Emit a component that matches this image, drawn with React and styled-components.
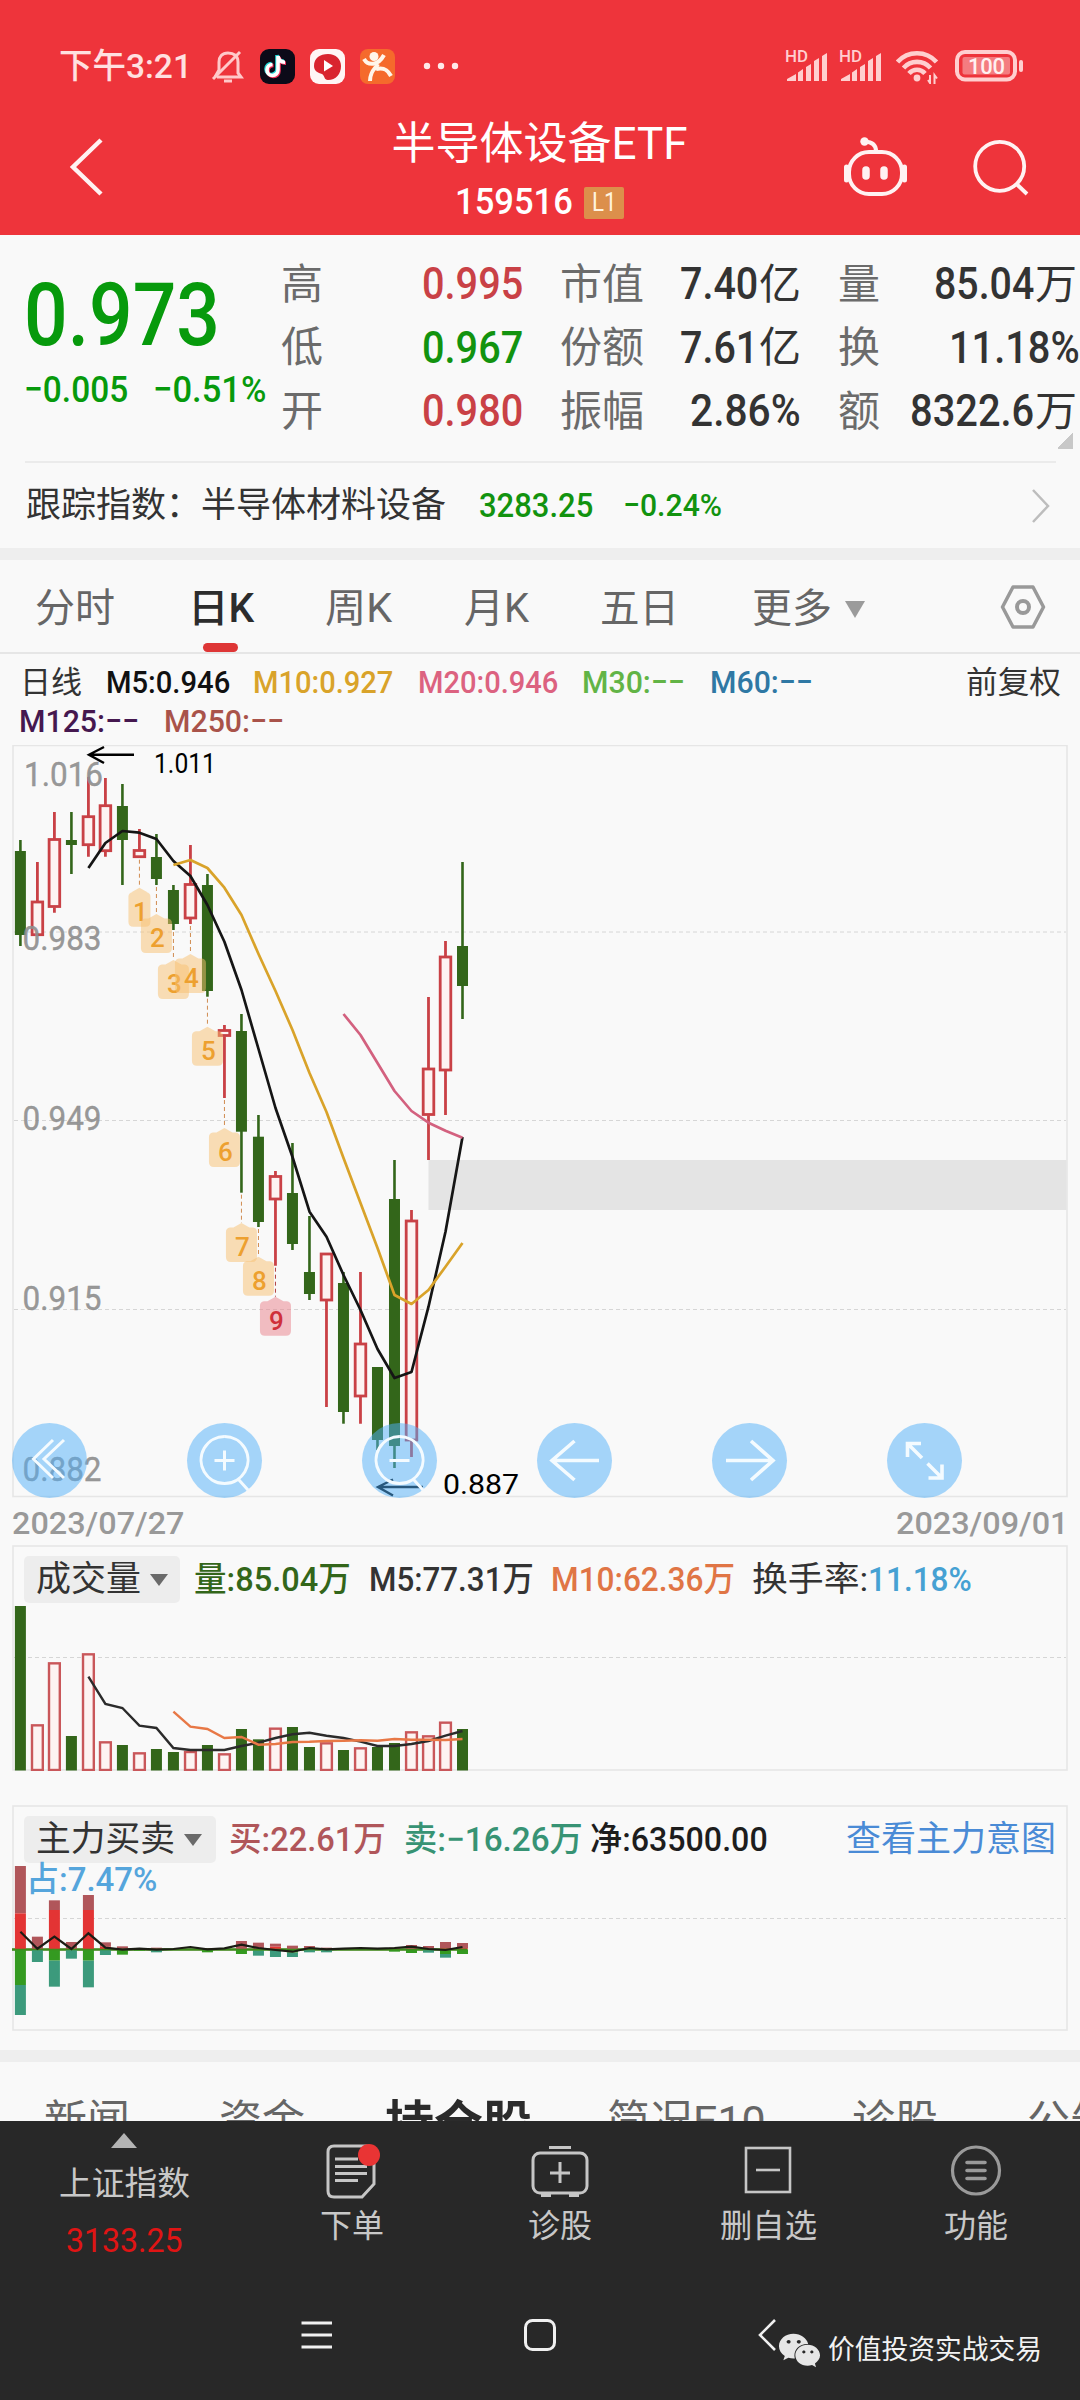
import React, { useLayoutEffect, useRef, useState } from "react";
import styled, { createGlobalStyle } from "styled-components";
import { FaWeixin } from "react-icons/fa";

const GlobalStyle = createGlobalStyle`
  * { box-sizing: border-box; }
  body {
    margin: 0;
    background: #f9f9f9;
    font-family: Roboto, "Noto Sans CJK SC", sans-serif;
    color: #333;
  }
  svg { display: block; flex: none; }
`;

const RED = "#c94146";
const GREEN = "#33661a";

const Page = styled.div`
  width: 1080px;
  height: 2400px;
  overflow: hidden;
  display: flex;
  flex-direction: column;
  background: #f9f9f9;
`;

/* ---------- text squeezed to a given width ---------- */

const FitBox = styled.span`
  display: block;
  flex: none;
  width: ${p => p.$w}px;
  margin-left: ${p => p.$ml || 0}px;
  line-height: 1.2;
  font-size: ${p => p.$size}px;
  font-weight: ${p => p.$weight || 400};
  color: ${p => p.$color || "inherit"};
`;

const FitInner = styled.span`
  display: inline-block;
  vertical-align: top;
  white-space: nowrap;
  transform-origin: left center;
`;

function Fit({ w, ml, size, color, weight, children }) {
  const ref = useRef(null);
  const [scale, setScale] = useState(1);
  useLayoutEffect(() => {
    setScale(w / ref.current.offsetWidth);
  }, [w]);
  return (
    <FitBox $w={w} $ml={ml} $size={size} $color={color} $weight={weight}>
      <FitInner ref={ref} style={{ transform: `scaleX(${scale})` }}>
        {children}
      </FitInner>
    </FitBox>
  );
}

/* ---------- header ---------- */

const Header = styled.header`
  height: 235px;
  flex: none;
  background: #ee343b;
  color: #fff;
`;

const StatusBar = styled.div`
  height: 86px;
  padding: 46px 0 0 59px;
  display: flex;
  align-items: center;
  color: #ffe0e0;
`;

const StatusIcons = styled.div`
  display: flex;
  align-items: center;
  margin-left: ${p => p.$ml}px;
  gap: ${p => p.$gap}px;
`;

const TitleBar = styled.div`
  height: 149px;
  display: grid;
  grid-template-columns: 393px 293px 1fr;
`;

const TitleSide = styled.div`
  display: flex;
  align-items: center;
  padding-top: 12px;
  padding-left: ${p => p.$pl}px;
  gap: 63px;
`;

const TitleCenter = styled.div`
  display: flex;
  flex-direction: column;
  align-items: center;
  padding-top: 32px;
`;

const CodeRow = styled.div`
  display: flex;
  align-items: center;
  height: 36px;
  margin-top: 14px;
`;

const LevelBadge = styled.span`
  width: 40px;
  height: 32px;
  margin-left: 11px;
  background: #dc8f4b;
  display: flex;
  align-items: center;
  justify-content: center;
  border-radius: 2px;
`;

function Bell() {
  return (
    <svg width="34" height="36" viewBox="0 0 34 36" fill="none" stroke="#ffc9c9" strokeWidth="3">
      <path d="M6 29 H30 L27 25 V14 C27 8 23 5 17 5 C11 5 8 9 8 14 V22 L4 29" />
      <path d="M2 31 L29 4" />
      <path d="M13 33 h8" />
    </svg>
  );
}

const NOTE = "M18 7 V21 a5.5 5.5 0 1 1 -5.5 -5.5 M18 7 c0.5 4 3 6.200 7 6.200";

function TikTok() {
  return (
    <svg width="35" height="35" viewBox="0 0 35 35" fill="none" strokeWidth="3.600">
      <rect width="35" height="35" rx="9" fill="#0c0a18" />
      <path d={NOTE} stroke="#25d8d8" transform="translate(-1 -1)" />
      <path d={NOTE} stroke="#f2335b" transform="translate(1 1)" />
      <path d={NOTE} stroke="#fff" />
    </svg>
  );
}

function PlayApp() {
  return (
    <svg width="35" height="35" viewBox="0 0 35 35">
      <rect width="35" height="35" rx="9" fill="#fff5f5" />
      <path d="M4 17 C4 9 10 5 18 5 C26 5 31 10 31 17 C31 25 26 31 18 31 C14 31 15 27 12 25 C8 24 4 22 4 17 Z" fill="#d9242f" />
      <path d="M14 11 L23 17 L14 22.500 Z" fill="#fff" />
    </svg>
  );
}

function RunnerApp() {
  return (
    <svg width="35" height="35" viewBox="0 0 35 35" fill="none" stroke="#fff6ea" strokeWidth="4">
      <rect width="35" height="35" rx="8" fill="#f56a2c" stroke="none" />
      <circle cx="14" cy="7.500" r="4.500" fill="#fff6ea" stroke="none" />
      <path d="M4 10 C8 17 18 17 24 6" />
      <path d="M10 32 C10 22 15 20 18 15 M16 20 C24 18 28 21 31 27" />
    </svg>
  );
}

function Dots() {
  return (
    <svg width="36" height="8" viewBox="0 0 36 8" fill="#ffe9e9">
      <circle cx="4" cy="4" r="3.200" />
      <circle cx="18" cy="4" r="3.200" />
      <circle cx="32" cy="4" r="3.200" />
    </svg>
  );
}

function Signal() {
  return (
    <svg width="42" height="34" viewBox="0 0 42 34" fill="#ffcfcf">
      <text x="0" y="13" fontSize="16" fontWeight="500" textLength="23" lengthAdjust="spacingAndGlyphs">HD</text>
      <path d="M2 32 V30 L11 25 V32 Z M13 32 V23.500 L18 20 V32 Z M21 32 V18 L26 15 V32 Z M29 32 V12 L34 9 V32 Z M37 32 V7 L42 4 V32 Z" />
    </svg>
  );
}

function Wifi() {
  return (
    <svg width="44" height="36" viewBox="0 0 44 36" fill="none" stroke="#ffcfcf" strokeWidth="4.600">
      <path d="M1.500 14 A26 26 0 0 1 40.500 14" />
      <path d="M7.500 20 A18 18 0 0 1 34.500 20" />
      <path d="M13 25.500 A10.500 10.500 0 0 1 29 25.500" />
      <circle cx="21" cy="30" r="3.400" fill="#ffcfcf" stroke="none" />
      <path d="M34 27 V35 L32 32 M38.500 36 V27 L41 30.500" strokeWidth="2" />
    </svg>
  );
}

function Battery() {
  return (
    <svg width="70" height="32" viewBox="0 0 70 32" fill="none">
      <rect x="2" y="2" width="58" height="27.500" rx="8" stroke="#ffcfcf" strokeWidth="4" />
      <rect x="7.500" y="7" width="47.500" height="17.500" rx="2" fill="#f47c80" />
      <path d="M66 12 V20" stroke="#ffcfcf" strokeWidth="4" strokeLinecap="round" />
      <text x="13" y="24" fontSize="22" fontWeight="500" textLength="37" fill="#fff0f0">100</text>
    </svg>
  );
}

function Robot() {
  return (
    <svg width="66" height="62" viewBox="842 137 66 62" fill="none" stroke="#fff2f2" strokeWidth="4">
      <rect x="849" y="153" width="53" height="42" rx="20" />
      <path d="M876 152 C876 146 872 143 865 142.500" />
      <circle cx="864.500" cy="142.500" r="4.200" fill="#fff2f2" stroke="none" />
      <path d="M846.500 168 V181 M904.500 168 V181" strokeWidth="5" strokeLinecap="round" />
      <path d="M866 171 V177 M884 171 V177" strokeWidth="7.500" strokeLinecap="round" />
    </svg>
  );
}

function Search() {
  return (
    <svg width="60" height="60" viewBox="971 138 60 60" fill="none" stroke="#fff2f2" strokeWidth="3.800">
      <circle cx="999.700" cy="167.300" r="24.500" />
      <path d="M1016.500 185 L1027 195" />
    </svg>
  );
}

/* ---------- quote ---------- */

const Quote = styled.section`
  height: 226px;
  flex: none;
  display: flex;
  background:
    linear-gradient(135deg, transparent 50%, #c8c8c8 50%) 1058px 197px / 15px 17px no-repeat;
`;

const PriceBlock = styled.div`
  width: 281px;
  flex: none;
  padding: 28px 0 0 24px;
  color: #079a0c;
`;

const ChangeRow = styled.div`
  display: flex;
  margin-top: 1px;
`;

const Stats = styled.div`
  display: grid;
  grid-template-columns: 242px 241px 239px;
  grid-auto-rows: 63.5px;
  column-gap: 37px;
  padding-top: 18px;
`;

const Stat = styled.div`
  display: flex;
  align-items: center;
  color: ${p => p.$color || "#333"};
  margin-right: ${p => p.$mr || 0}px;
`;

const StatLabel = styled.span`
  flex: 1;
  font-size: 42px;
  line-height: 50px;
  color: #6b6b6b;
  white-space: nowrap;
`;

const stats = [
  ["高", "0.995", 101, "", RED],
  ["市值", "7.40", 78, "亿"],
  ["量", "85.04", 100, "万"],
  ["低", "0.967", 101, "", "#12930f"],
  ["份额", "7.61", 78, "亿"],
  ["换", "11.18%", 131, "", "", -3],
  ["开", "0.980", 101, "", RED],
  ["振幅", "2.86%", 111, ""],
  ["额", "8322.6", 124, "万"],
];

const IndexRow = styled.div`
  height: 87px;
  flex: none;
  display: flex;
  align-items: center;
  margin: 0 24px 0 25px;
  border-top: 2px solid #ebebeb;
`;

const Chevron = styled.svg`
  margin-left: auto;
  margin-right: 4px;
`;

const Band = styled.div`
  height: 12px;
  flex: none;
  background: #eeeeee;
`;

/* ---------- period tabs ---------- */

const Tabs = styled.nav`
  height: 94px;
  flex: none;
  display: flex;
  align-items: center;
  padding-top: 2px;
  border-bottom: 2px solid #e6e6e6;
  color: #666;
`;

const Tab = styled.div`
  position: relative;
  display: flex;
  align-items: center;
  height: 100%;
  padding-top: ${p => (p.$icon ? 0 : 4)}px;
  margin-left: ${p => p.$ml}px;
  ${p => p.$active && `
    color: #2c2c2c;
    &::after {
      content: "";
      position: absolute;
      left: 15px;
      bottom: 0;
      width: 35px;
      height: 9px;
      border-radius: 5px;
      background: #de3636;
    }
  `}
`;

const Caret = styled.span`
  width: 0;
  height: 0;
  margin-left: ${p => p.$ml}px;
  border-left: ${p => p.$s}px solid transparent;
  border-right: ${p => p.$s}px solid transparent;
  border-top: ${p => p.$h}px solid ${p => p.$color};
`;

/* ---------- charts ---------- */

const Legend = styled.div`
  height: 91px;
  flex: none;
  padding-top: 9px;
`;

const LegendRow = styled.div`
  height: 39px;
  display: flex;
  align-items: center;
`;

const ChartWrap = styled.div`
  position: relative;
  flex: none;
`;

const Tools = styled.div`
  position: absolute;
  left: 12px;
  bottom: 2px;
  display: flex;
  gap: 100px;
`;

const Tool = styled.button`
  width: 75px;
  height: 75px;
  padding: 0;
  border: 0;
  border-radius: 50%;
  background: rgba(80, 175, 250, 0.5);
`;

const Dates = styled.div`
  height: 45px;
  flex: none;
  display: flex;
  align-items: center;
  justify-content: space-between;
  padding: 1px 12px 0 12px;
  color: #999;
`;

const Panel = styled.section`
  flex: none;
  display: grid;
  margin-bottom: ${p => p.$mb || 0}px;
  > * { grid-area: 1 / 1; }
`;

const PanelHead = styled.div`
  padding: 11px 0 0 24px;
`;

const PanelRow = styled.div`
  display: flex;
  align-items: center;
  height: ${p => p.$h || 47}px;
`;

const Picker = styled.div`
  width: ${p => p.$w}px;
  height: 47px;
  flex: none;
  display: flex;
  align-items: center;
  background: #ededed;
  border-radius: 5px;
`;

const cx = i => 20.4 + 17.004 * i;

// up/down, high, body top, body bottom, low
const candles = [
  ["d", 840, 851, 935, 946],
  ["u", 862, 902, 935.7, 935.7],
  ["u", 812, 839.5, 907.5, 912.7],
  ["d", 812, 840, 845, 874],
  ["u", 777, 816.7, 845.7, 856.7],
  ["u", 778, 805.7, 851.7, 856.7],
  ["d", 784, 806, 840, 885],
  ["u", 829, 850.5, 857.7, 857.7],
  ["d", 834, 857, 879, 885],
  ["d", 885, 890, 924, 930],
  ["u", 845, 884.5, 919, 924],
  ["d", 874, 885, 991, 996.7],
  ["u", 1025, 1030.5, 1036.5, 1098],
  ["d", 1014, 1031, 1131.7, 1192.7],
  ["d", 1115, 1136.7, 1222, 1227],
  ["u", 1171, 1176.5, 1200, 1265.7],
  ["d", 1143, 1193, 1244, 1250],
  ["d", 1216, 1272, 1294, 1300],
  ["u", 1254, 1254, 1301, 1407],
  ["d", 1272, 1283, 1412, 1423.7],
  ["u", 1272, 1344, 1397, 1423.7],
  ["d", 1367, 1367, 1440, 1450],
  ["d", 1160, 1199, 1446, 1468],
  ["u", 1210, 1221, 1441, 1457],
  ["u", 997, 1069, 1115.5, 1160],
  ["u", 941, 957, 1071, 1115],
  ["d", 862, 946, 986, 1019],
];

const ma5 = [868, 843, 831, 832.7, 839, 861, 876, 905, 941.7, 990, 1049, 1108, 1157, 1211.7, 1236.7, 1275, 1310, 1349, 1378, 1372, 1306.7, 1231.7, 1137];
const ma10 = [865, 860, 868, 887.7, 915, 954, 991, 1030, 1073, 1112, 1158, 1203, 1248, 1295, 1304, 1290, 1266.7, 1243];
const ma20 = [1014, 1035, 1063, 1091, 1111, 1122.7, 1130.7, 1137.7];

// label, y of the tip
const marks = [887.7, 914, 960, 954, 1026.7, 1128, 1223, 1256.7, 1296.7];

const volumes = [198, 553, 367, 588, 340, 604, 615, 637, 627, 636, 633, 615, 640, 567, 598, 563, 561, 621, 607, 630, 622, 621, 609, 574, 586, 545, 567].map(v => 1540 + v / 3);
const vol5 = [410, 492, 504, 557, 564, 624, 630, 630, 630, 618, 608, 594, 583, 578, 587, 594, 605, 618, 618, 612, 603, 587, 573].map(v => 1540 + v / 3);
const vol10 = [515, 560, 567, 594, 591, 614, 612, 606, 605, 603, 602, 601, 602, 597, 599, 599, 600, 597].map(v => 1540 + v / 3);

// index, buy top, big buy top, big sell bottom, sell bottom
const flows = [
  [0, 258, 400, 615, 705],
  [1, 470, 508, 508, 546],
  [2, 361, 390, 542, 620],
  [3, 486, 508, 508, 536],
  [4, 345, 390, 542, 622],
  [5, 487, 500, 508, 525],
  [6, 499, 508, 524, 524],
  [7, 505, 508, 512, 512],
  [8, 503, 508, 508, 517],
  [11, 505, 508, 517, 517],
  [13, 483, 508, 522, 522],
  [14, 488, 508, 512, 527],
  [15, 491, 500, 508, 531],
  [16, 497, 508, 518, 531],
  [17, 498, 508, 508, 517],
  [18, 503, 508, 508, 517],
  [22, 503, 508, 515, 515],
  [23, 495, 508, 519, 519],
  [24, 498, 508, 508, 518],
  [25, 486, 505, 522, 533],
  [26, 489, 505, 522, 522],
];
const net = [455, 506, 470, 507, 460, 503, 509, 506, 509, 507, 501, 508, 505, 494, 504, 510, 515, 504, 508, 506, 504, 506, 504, 500, 507, 510, 501].map(v => 1780 + v / 3);

const line = (values, from) => values.map((y, i) => `${cx(i + from).toFixed(1)},${y.toFixed(1)}`).join(" ");

function Frame({ y, h, grid }) {
  return (
    <g fill="none" stroke="#e6e6e6">
      <rect x="13" y={y} width="1054" height={h} strokeWidth="1.600" />
      {grid.map(g => (
        <path key={g} d={`M14 ${g} H1066`} stroke="#d6d6d6" strokeWidth="1" strokeDasharray="4 3" />
      ))}
    </g>
  );
}

function Candle({ i, data: [dir, high, top, bottom, low] }) {
  const x = cx(i);
  if (dir === "d") {
    return (
      <g fill={GREEN}>
        <rect x={x - 1.3} y={high} width="2.6" height={low - high} />
        <rect x={x - 5.5} y={top} width="11" height={bottom - top} />
      </g>
    );
  }
  return (
    <g stroke={RED} strokeWidth="2.8" fill="#fdf3f2">
      <path d={`M${x} ${high} V${top} M${x} ${bottom} V${low}`} />
      <rect x={x - 5.3} y={top} width="10.6" height={Math.max(bottom - top, 2) - 1} />
    </g>
  );
}

function Mark({ n, y, x, low }) {
  const hot = n === 9;
  const w = n === 1 ? 11 : 15.5;
  return (
    <g>
      <path d={`M${x} ${low + 2} V${y}`} stroke={hot ? "#b04040" : "#d08c50"} strokeDasharray="4 3" />
      <path
        d={`M${x} ${y} L${x + 8} ${y + 4.5} H${x + w - 4} Q${x + w} ${y + 5} ${x + w} ${y + 9} V${y + 34} Q${x + w} ${y + 39} ${x + w - 5} ${y + 39} H${x - w + 5} Q${x - w} ${y + 39} ${x - w} ${y + 34} V${y + 9} Q${x - w} ${y + 5} ${x - w + 4} ${y + 4.5} H${x - 8} Z`}
        fill={hot ? "#ea808a" : "#f8c070"}
        fillOpacity="0.5"
      />
      <text x={x + 1} y={y + 33} fontSize="26" fontWeight="500" textAnchor="middle" fill={hot ? "#cf2f3a" : "#eda02f"}>{n}</text>
    </g>
  );
}

const prices = [["1.016", 785.5], ["0.983", 949.5], ["0.949", 1129.5], ["0.915", 1309.5], ["0.882", 1481]];

function PriceChart() {
  return (
    <svg width="1080" height="755" viewBox="0 745 1080 755">
      <Frame y={745.5} h={751} grid={[932, 1120.5, 1309.5]} />
      <rect x="428.500" y="1160" width="638" height="50" fill="#e4e4e4" />
      {candles.map((c, i) => <Candle key={i} i={i} data={c} />)}
      {marks.map((y, i) => <Mark key={i} n={i + 1} y={y} x={cx(i + 7)} low={candles[i + 7][4]} />)}
      <g fill="none" strokeWidth="2.700" strokeLinejoin="round">
        <polyline points={line(ma5, 4)} stroke="#151515" />
        <polyline points={line(ma10, 9)} stroke="#d9a32a" />
        <polyline points={line(ma20, 19)} stroke="#d3617f" />
      </g>
      <g fill="#8f8f8f" fillOpacity="0.92" fontSize="34" stroke="#8f8f8f" strokeWidth="0.400">
        {prices.map(([t, y], i) => (
          <text key={t} x={i ? 22.5 : 24} y={y} textLength="79" lengthAdjust="spacingAndGlyphs">{t}</text>
        ))}
      </g>
      <g fontSize="28.500" fill="#000">
        <text x="154" y="773" textLength="62" lengthAdjust="spacingAndGlyphs">1.011</text>
        <text x="443" y="1494" textLength="76" lengthAdjust="spacingAndGlyphs">0.887</text>
      </g>
      <path d="M134 754.700 H90 M104 747 L89 754.700 L104 763" fill="none" stroke="#000" strokeWidth="2.400" />
      <path d="M423 1487 H379 M393 1479.500 L378 1487 L393 1495.500" fill="none" stroke="#000" strokeWidth="2.400" />
    </svg>
  );
}

const toolIcons = [
  "M41 17 L21.500 36 L41 55 M52 17 L32 36 L52 55",
  "M37.500 13.500 a23.500 23.500 0 1 0 0.100 0 M27.500 37.500 h20 M37.500 27.500 v20 M52 57 L61 67",
  "M37.500 13.500 a23.500 23.500 0 1 0 0.100 0 M27.500 37.500 h20 M52 57 L61 67",
  "M62 37.500 H15 M37.500 18 L15 37.500 L37.500 57",
  "M14 37.500 H61 M39 18 L61 37.500 L39 57",
  "M35 35 L20.500 20.500 M20.500 34 V20.500 H34 M40.500 40.500 L55 55 M55 41.500 V55 H41.500",
];

function VolumeChart() {
  return (
    <svg width="1080" height="226" viewBox="0 1545 1080 226">
      <Frame y={1546} h={224} grid={[1657.5]} />
      {volumes.map((y, i) =>
        candles[i][0] === "d" ? (
          <rect key={i} x={cx(i) - 5.5} y={y} width="11" height={1770.5 - y} fill={GREEN} />
        ) : (
          <rect key={i} x={cx(i) - 5.4} y={y + 1} width="10.800" height={1769.5 - y - 0.5} fill="#fdf3f2" stroke="#c9575a" strokeWidth="2.400" />
        )
      )}
      <g fill="none" strokeWidth="2.400">
        <polyline points={line(vol5, 4)} stroke="#2b2b2b" />
        <polyline points={line(vol10, 9)} stroke="#e87846" />
      </g>
    </svg>
  );
}

function FlowChart() {
  const py = v => 1780 + v / 3;
  return (
    <svg width="1080" height="226" viewBox="0 1805 1080 226">
      <Frame y={1806} h={224} grid={[1918.5]} />
      <path d="M12 1949.500 H467" stroke="#4a8a22" strokeWidth="2.400" />
      {flows.map(([i, a, b, c, d]) => (
        <g key={i}>
          <rect x={cx(i) - 5.5} y={py(a)} width="11" height={(b - a) / 3} fill="#b0565a" />
          <rect x={cx(i) - 5.5} y={py(b)} width="11" height={(508 - b) / 3} fill="#e33434" />
          <rect x={cx(i) - 5.5} y={py(508)} width="11" height={(c - 508) / 3} fill="#349a20" />
          <rect x={cx(i) - 5.5} y={py(c)} width="11" height={(d - c) / 3} fill="#3c9a7c" />
        </g>
      ))}
      <path d="M12 1949.500 H467" stroke="#3f8a1c" strokeWidth="1.600" />
      <polyline points={line(net, 0)} fill="none" stroke="#1c1c14" strokeWidth="2.200" />
    </svg>
  );
}

/* ---------- bottom ---------- */

const Sections = styled.nav`
  height: 59px;
  flex: none;
  overflow: hidden;
  display: flex;
  align-items: flex-start;
  padding-top: 34px;
  color: #666;
`;

const Bottom = styled.footer`
  height: 279px;
  flex: none;
  background: #282828;
  color: #c8c8c8;
`;

const Actions = styled.div`
  display: grid;
  grid-template-columns: 248px repeat(4, 208px);
  height: 160px;
`;

const Action = styled.div`
  display: flex;
  flex-direction: column;
  align-items: center;
  padding-top: ${p => p.$pt || 21}px;
  gap: ${p => p.$gap || 7}px;
`;

const UpCaret = styled.span`
  width: 0;
  height: 0;
  border-left: 13px solid transparent;
  border-right: 13px solid transparent;
  border-bottom: 15px solid #b4b4b4;
`;

const SystemNav = styled.div`
  display: flex;
  align-items: flex-start;
  padding: 36px 0 0 301px;
`;

const Watermark = styled.div`
  display: flex;
  align-items: center;
  color: #f2f2f2;
  padding-top: 12px;
`;

export default function App() {
  return (
    <Page>
      <GlobalStyle />
      <Header>
        <StatusBar>
          <Fit w={133} size={34} weight={500}>下午3:21</Fit>
          <StatusIcons $ml={19} $gap={15}>
            <Bell />
            <TikTok />
            <PlayApp />
            <RunnerApp />
          </StatusIcons>
          <StatusIcons $ml={28}>
            <Dots />
          </StatusIcons>
          <StatusIcons $ml={326} $gap={12}>
            <Signal />
            <Signal />
          </StatusIcons>
          <StatusIcons $ml={15}>
            <Wifi />
          </StatusIcons>
          <StatusIcons $ml={15}>
            <Battery />
          </StatusIcons>
        </StatusBar>
        <TitleBar>
          <TitleSide $pl={68}>
            <svg width="38" height="60" viewBox="0 0 38 60" fill="none" stroke="#fff2f2" strokeWidth="4.500">
              <path d="M33 3 L5 30 L33 57" />
            </svg>
          </TitleSide>
          <TitleCenter>
            <Fit w={296} size={44}>半导体设备ETF</Fit>
            <CodeRow>
              <Fit w={118} size={36} weight={500}>159516</Fit>
              <LevelBadge>
                <Fit w={25} size={25} color="#fff3df">L1</Fit>
              </LevelBadge>
            </CodeRow>
          </TitleCenter>
          <TitleSide $pl={156}>
            <Robot />
            <Search />
          </TitleSide>
        </TitleBar>
      </Header>

      <Quote>
        <PriceBlock>
          <Fit w={196} size={87} weight={500}>0.973</Fit>
          <ChangeRow>
            <Fit w={104} size={37} weight={500}>−0.005</Fit>
            <Fit w={113} ml={25} size={37} weight={500}>−0.51%</Fit>
          </ChangeRow>
        </PriceBlock>
        <Stats>
          {stats.map(([label, value, w, unit, color, mr]) => (
            <Stat key={label} $color={color} $mr={mr}>
              <StatLabel>{label}</StatLabel>
              <Fit w={w} size={44} weight={500}>{value}</Fit>
              {unit && <Fit w={42} ml={1} size={42}>{unit}</Fit>}
            </Stat>
          ))}
        </Stats>
      </Quote>

      <IndexRow>
        <Fit w={420} ml={1} size={35}>跟踪指数：半导体材料设备</Fit>
        <Fit w={114} ml={33} size={34} weight={500} color="#12930f">3283.25</Fit>
        <Fit w={99} ml={30} size={32} weight={500} color="#12930f">−0.24%</Fit>
        <Chevron width="22" height="36" viewBox="0 0 22 36" fill="none" stroke="#bdbdbd" strokeWidth="2.500">
          <path d="M3 2 L18 18 L3 34" />
        </Chevron>
      </IndexRow>
      <Band />

      <Tabs>
        <Tab $ml={35}><Fit w={80} size={40}>分时</Fit></Tab>
        <Tab $ml={73} $active><Fit w={66} size={40} weight={500}>日K</Fit></Tab>
        <Tab $ml={71}><Fit w={67} size={40}>周K</Fit></Tab>
        <Tab $ml={72}><Fit w={65} size={40}>月K</Fit></Tab>
        <Tab $ml={71}><Fit w={79} size={40}>五日</Fit></Tab>
        <Tab $ml={73}>
          <Fit w={80} size={40}>更多</Fit>
          <Caret $ml={13} $s={10} $h={17} $color="#9b9b9b" />
        </Tab>
        <Tab $ml={135} $icon>
          <svg width="46" height="44" viewBox="0 0 46 44" fill="none" stroke="#999" strokeWidth="3.500" strokeLinejoin="round">
            <path d="M13 2 H33 L43.500 22 L33 42 H13 L2.500 22 Z" />
            <circle cx="23" cy="22" r="6" strokeWidth="4" />
          </svg>
        </Tab>
      </Tabs>

      <Legend>
        <LegendRow>
          <Fit w={62} ml={20} size={31}>日线</Fit>
          <Fit w={124} ml={24} size={32} weight={500} color="#111">M5:0.946</Fit>
          <Fit w={140} ml={23} size={32} weight={500} color="#d9a32a">M10:0.927</Fit>
          <Fit w={140} ml={25} size={32} weight={500} color="#dc6280">M20:0.946</Fit>
          <Fit w={103} ml={24} size={32} weight={500} color="#62b446">M30:−−</Fit>
          <Fit w={103} ml={25} size={32} weight={500} color="#2f78a4">M60:−−</Fit>
          <Fit w={95} ml={153} size={31}>前复权</Fit>
        </LegendRow>
        <LegendRow>
          <Fit w={120} ml={19} size={32} weight={500} color="#45184f">M125:−−</Fit>
          <Fit w={120} ml={25} size={32} weight={500} color="#a9534a">M250:−−</Fit>
        </LegendRow>
      </Legend>

      <ChartWrap>
        <PriceChart />
        <Tools>
          {toolIcons.map((d, i) => (
            <Tool key={i}>
              <svg width="75" height="75" viewBox="0 0 75 75" fill="none" stroke="#f4fbff" strokeWidth={i < 3 ? 3 : 3.6}>
                <path d={d} />
              </svg>
            </Tool>
          ))}
        </Tools>
      </ChartWrap>

      <Dates>
        <Fit w={172} size={32} weight={500}>2023/07/27</Fit>
        <Fit w={172} size={32} weight={500}>2023/09/01</Fit>
      </Dates>

      <Panel $mb={34}>
        <VolumeChart />
        <PanelHead>
          <PanelRow>
            <Picker $w={156}>
              <Fit w={105} ml={12} size={35}>成交量</Fit>
              <Caret $ml={9} $s={9} $h={12} $color="#6a6a6a" />
            </Picker>
            <Fit w={157} ml={14} size={34} weight={500} color={GREEN}>量:85.04万</Fit>
            <Fit w={165} ml={18} size={34} weight={500}>M5:77.31万</Fit>
            <Fit w={184} ml={17} size={34} weight={500} color="#e07545">M10:62.36万</Fit>
            <Fit w={116} ml={17} size={34}>换手率:</Fit>
            <Fit w={104} ml={0} size={34} weight={500} color="#46a1d3">11.18%</Fit>
          </PanelRow>
        </PanelHead>
      </Panel>

      <Panel $mb={19}>
        <FlowChart />
        <PanelHead>
          <PanelRow>
            <Picker $w={192}>
              <Fit w={139} ml={12} size={35}>主力买卖</Fit>
              <Caret $ml={9} $s={9} $h={12} $color="#6a6a6a" />
            </Picker>
            <Fit w={157} ml={13} size={34} weight={500} color="#b0565a">买:22.61万</Fit>
            <Fit w={179} ml={18} size={34} weight={500} color="#379374">卖:−16.26万</Fit>
            <Fit w={178} ml={7} size={34} weight={500} color="#1d1d1d">净:63500.00</Fit>
            <Fit w={210} ml={78} size={35} color="#4a8bd6">查看主力意图</Fit>
          </PanelRow>
          <PanelRow $h={32}>
            <Fit w={131} ml={2} size={34} weight={500} color="#55a5dc">占:7.47%</Fit>
          </PanelRow>
        </PanelHead>
      </Panel>

      <Band />
      <Sections>
        <Fit w={86} ml={44} size={43}>新闻</Fit>
        <Fit w={86} ml={89} size={43}>资金</Fit>
        <Fit w={147} ml={80} size={49} weight={700} color="#2b2b2b">持仓股</Fit>
        <Fit w={159} ml={75} size={43}>简况E10</Fit>
        <Fit w={86} ml={86} size={43}>诊股</Fit>
        <Fit w={86} ml={89} size={43}>公告</Fit>
      </Sections>

      <Bottom>
        <Actions>
          <Action $pt={12} $gap={16}>
            <UpCaret />
            <Fit w={131} size={33}>上证指数</Fit>
            <Fit w={117} size={34} color="#e01414">3133.25</Fit>
          </Action>
          <Action>
            <svg width="56" height="58" viewBox="0 0 56 58" fill="none" stroke="#c6c6c6" strokeWidth="3">
              <path d="M10 4 H42 Q50 4 50 11 V42 L38 55 H10 Q4 55 4 49 V10 Q4 4 10 4 Z" />
              <path d="M11 17 H34 M11 24.500 H43 M11 31.500 H43 M11 38.500 H34" />
              <circle cx="45" cy="13" r="11" fill="#e93434" stroke="none" />
            </svg>
            <Fit w={64} size={32}>下单</Fit>
          </Action>
          <Action>
            <svg width="58" height="58" viewBox="0 0 58 58" fill="none" stroke="#c6c6c6" strokeWidth="3">
              <rect x="2" y="11" width="54" height="40" rx="7" />
              <path d="M18 5.500 H40 M29 20 V41 M19 31 H39 M10 53.500 H20 M38 53.500 H48" />
            </svg>
            <Fit w={64} size={32}>诊股</Fit>
          </Action>
          <Action>
            <svg width="58" height="58" viewBox="0 0 58 58" fill="none" stroke="#c6c6c6" strokeWidth="2.600">
              <rect x="7" y="6" width="44" height="44" />
              <path d="M17 28 H41" />
            </svg>
            <Fit w={97} size={32}>删自选</Fit>
          </Action>
          <Action>
            <svg width="58" height="58" viewBox="0 0 58 58" fill="none" stroke="#9a9a9a" strokeWidth="3.200">
              <circle cx="29" cy="28.500" r="23.500" />
              <path d="M20 20.500 H38 M20 28.500 H38 M20 36.500 H38" strokeWidth="3.600" strokeLinecap="round" />
            </svg>
            <Fit w={64} size={32}>功能</Fit>
          </Action>
        </Actions>
        <SystemNav>
          <svg width="477" height="36" viewBox="301 2317 477 36" fill="none" stroke="#f0f0f0" strokeWidth="3">
            <path d="M301.500 2323 H332 M301.500 2335 H332 M301.500 2347 H332" />
            <rect x="525.500" y="2320.500" width="29" height="29" rx="7" />
            <path d="M775 2320 L760 2335 L775 2350" strokeWidth="2.600" />
          </svg>
          <Watermark>
            <FaWeixin size={43} color="#e6e6e6" />
            <Fit w={214} ml={7} size={27}>价值投资实战交易</Fit>
          </Watermark>
        </SystemNav>
      </Bottom>
    </Page>
  );
}
